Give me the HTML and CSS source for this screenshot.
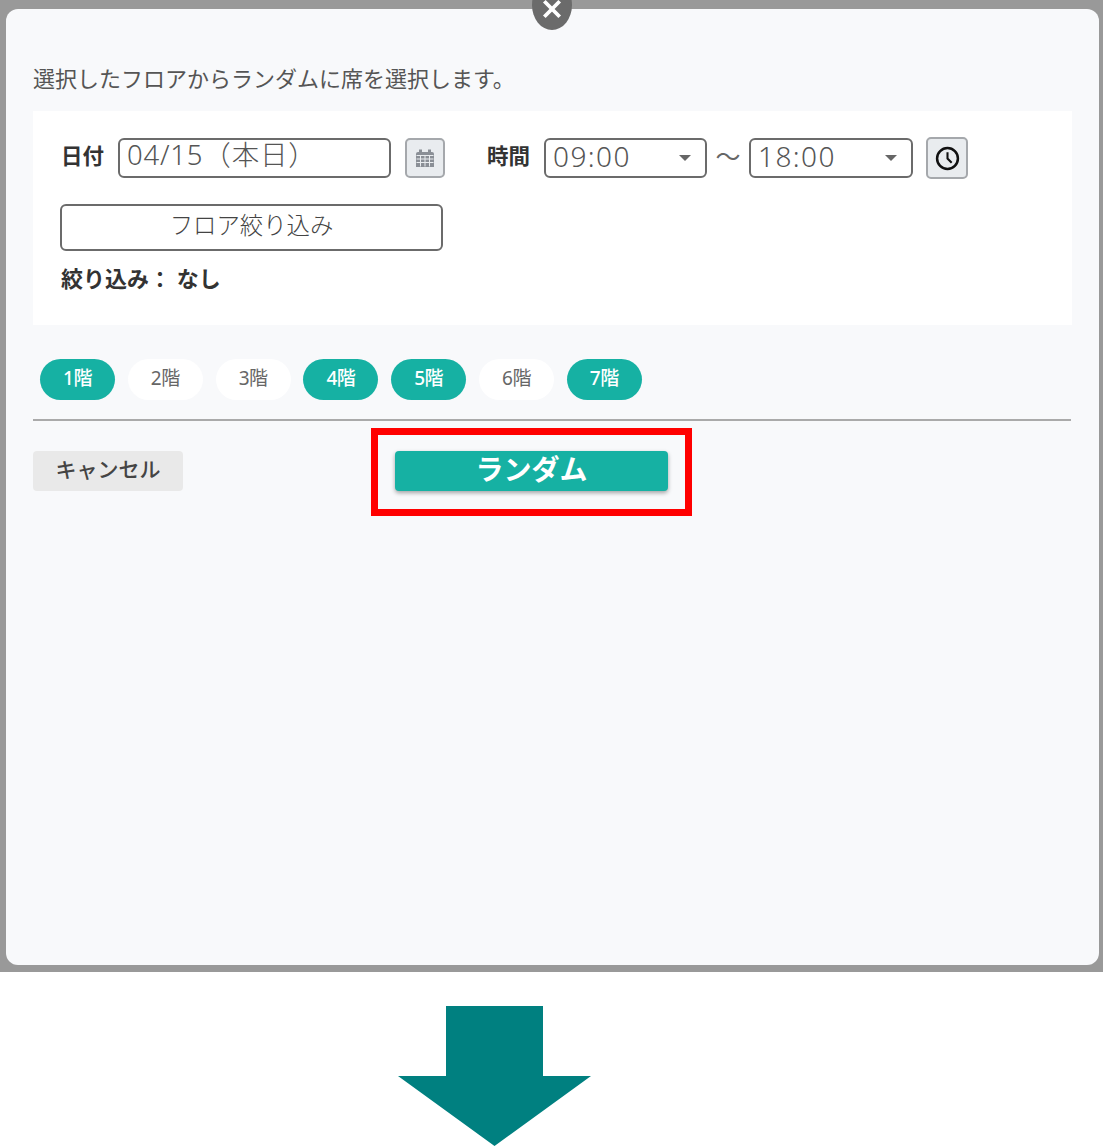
FILE: index.html
```html
<!DOCTYPE html>
<html lang="ja">

<head>
    <meta charset="UTF-8">
    <title>ランダム</title>
    <link rel="stylesheet" href="styles.css">
</head>

<body>

    <section class="overlay">
        <div class="modal">
            <button class="modal-close" aria-label="閉じる">
                <svg viewBox="0 0 20 20" width="22" height="22">
                    <path d="M3 3 L17 17 M17 3 L3 17" stroke="#fff" stroke-width="3.400" fill="none" />
                </svg>
            </button>

            <p class="lead">選択したフロアからランダムに席を選択します。</p>

            <div class="panel">
                <div class="when">
                    <span class="label">日付</span>
                    <div class="field date-field">04/15（本日）</div>
                    <button class="icon-btn cal-btn" aria-label="カレンダー">
                        <svg viewBox="0 0 20 20" width="20" height="20">
                            <path fill="#8a8f96" d="M1 6 Q1 4 3 4 H17 Q19 4 19 6 V19 H1 Z" />
                            <path fill="#8a8f96" d="M4 1.500 H7 V5 H4 Z M13 1.500 H16 V5 H13 Z" />
                            <path stroke="#e9ecef" stroke-width="1" fill="none"
                                d="M1.500 7.500 H18.500 M1.500 11 H18.500 M1.500 14.500 H18.500 M5.500 7.500 V18.500 M10 7.500 V18.500 M14.500 7.500 V18.500" />
                        </svg>
                    </button>
                    <span class="label time-label">時間</span>
                    <div class="field select-field">09:00<i class="caret"></i></div>
                    <span class="tilde">～</span>
                    <div class="field select-field end-field">18:00<i class="caret"></i></div>
                    <button class="icon-btn clock-btn" aria-label="時計">
                        <svg viewBox="0 0 24 24" width="25" height="25">
                            <circle cx="12" cy="12" r="10" fill="none" stroke="#111" stroke-width="2.400" />
                            <path d="M12 6 V12 L16 16" fill="none" stroke="#111" stroke-width="2" />
                        </svg>
                    </button>
                </div>
                <button class="filter-btn">フロア絞り込み</button>
                <p class="filter-state">絞り込み： なし</p>
            </div>

            <div class="chips">
                <span class="chip on">1階</span>
                <span class="chip">2階</span>
                <span class="chip">3階</span>
                <span class="chip on">4階</span>
                <span class="chip on">5階</span>
                <span class="chip">6階</span>
                <span class="chip on">7階</span>
            </div>

            <hr class="rule">

            <div class="actions">
                <button class="cancel-btn">キャンセル</button>
                <div class="highlight">
                    <button class="random-btn">ランダム</button>
                </div>
            </div>
        </div>
    </section>

    <div class="arrow-wrap">
        <svg class="arrow" viewBox="0 0 193 140" width="193" height="140">
            <path fill="#008080" d="M48 0 H145 V70 H193 L96.500 140 L0 70 H48 Z" />
        </svg>
    </div>

</body>

</html>
```

FILE: styles.css
```css
* {
    box-sizing: border-box;
}

body {
    margin: 0;
    background-color: white;
    font-family: "Noto Sans", "Noto Sans CJK JP", sans-serif;
    color: #555;
    overflow: hidden;
}

button {
    font-family: inherit;
    padding: 0;
}

.overlay {
    background-color: #999;
    height: 972px;
    padding: 9px 4px 7px 6px;
}

.modal {
    position: relative;
    height: 956px;
    background-color: #f8f9fb;
    border-radius: 12px;
    padding: 52px 27px 0;
}

.modal-close {
    position: absolute;
    left: 526px;
    top: -29px;
    width: 40px;
    height: 50px;
    border: 0;
    border-radius: 50%;
    background-color: #6b6b6b;
    display: flex;
    align-items: center;
    justify-content: center;
    padding-top: 8px;
}

.lead {
    margin: 0;
    font-size: 22px;
    line-height: 34px;
    height: 50px;
}

.panel {
    background-color: white;
    height: 214px;
    padding: 27px 27px 0 28px;
}

.when {
    display: flex;
    align-items: center;
    height: 40px;
}

.label {
    width: 57px;
    font-size: 21.500px;
    line-height: 36px;
    height: 40px;
    font-weight: 700;
    color: #333;
}

.field {
    height: 40px;
    background-color: white;
    border: 2px solid #6b6b6b;
    border-radius: 6px;
    font-size: 28px;
    font-weight: 300;
    line-height: 33px;
    padding-left: 7px;
    color: #555;
}

.date-field {
    width: 273px;
    font-size: 27.500px;
    line-height: 30px;
    letter-spacing: 0.8px;
}

.icon-btn {
    display: flex;
    align-items: center;
    justify-content: center;
    background-color: #e9ecef;
    border: 2px solid #a5a8ac;
    border-radius: 5px;
    height: 40px;
}

.cal-btn {
    width: 40px;
    margin-left: 14px;
}

.time-label {
    margin-left: 42px;
    width: 57px;
}

.select-field {
    position: relative;
    width: 163px;
    letter-spacing: 1.400px;
}

.end-field {
    width: 164px;
}

.caret {
    position: absolute;
    right: 14px;
    top: 15px;
    border-style: solid;
    border-width: 6px 6px 0;
    border-color: #666 transparent transparent;
}

.tilde {
    width: 42px;
    height: 40px;
    text-align: center;
    font-size: 25px;
    line-height: 36px;
    color: #666;
}

.clock-btn {
    width: 42px;
    height: 42px;
    margin-left: 13px;
}

.filter-btn {
    display: block;
    width: 383px;
    height: 47px;
    margin: 26px 0 0 -1px;
    padding-bottom: 8px;
    background-color: white;
    border: 2px solid #6b6b6b;
    border-radius: 6px;
    font-size: 23.400px;
    font-weight: 300;
    color: #444;
}

.filter-state {
    margin: 11px 0 0;
    font-size: 22px;
    line-height: 32px;
    font-weight: 700;
    color: #333;
}

.chips {
    display: flex;
    gap: 12.800px;
    margin: 34px 0 0 7px;
}

.chip {
    width: 75px;
    height: 41px;
    border-radius: 21px;
    background-color: white;
    font-size: 19px;
    letter-spacing: -0.5px;
    line-height: 38px;
    text-align: center;
    color: #666;
}

.chip.on {
    background-color: #16b1a3;
    color: white;
    font-weight: 500;
}

.rule {
    margin: 19px 0 0;
    border: 0;
    border-top: 2px solid #aaa;
    width: 1038px;
}

.actions {
    display: flex;
    align-items: flex-start;
    margin-top: 7px;
}

.cancel-btn {
    width: 150px;
    height: 40px;
    margin-top: 23px;
    padding-bottom: 6px;
    background-color: #e9e9e9;
    border: 0;
    border-radius: 4px;
    font-size: 21px;
    font-weight: 500;
    color: #444;
}

.highlight {
    width: 321px;
    height: 88px;
    margin-left: 188px;
    border: 7px solid #f00;
    padding: 16px 0 0 17px;
}

.random-btn {
    display: block;
    width: 273px;
    height: 40px;
    padding-bottom: 4px;
    background-color: #16b1a3;
    border: 0;
    border-radius: 4px;
    box-shadow: 0 2px 4px rgba(0, 0, 0, .35);
    color: white;
    font-size: 28px;
    font-weight: 700;
    line-height: 36px;
}

.arrow-wrap {
    padding: 34px 0 0 398px;
}

.arrow {
    display: block;
}
```
